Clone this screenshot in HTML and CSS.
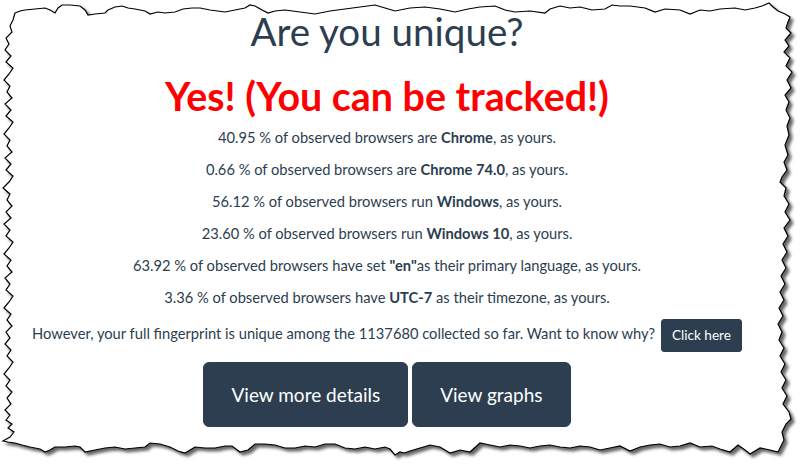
FILE: index.html
```html
<!DOCTYPE html>
<html lang="en">
<head>
<meta charset="utf-8">
<title>Are you unique?</title>
<link rel="stylesheet" href="styles.css">
</head>
<body>
<svg class="paper" width="809" height="471" viewBox="0 0 809 471" aria-hidden="true">
  <defs>
    <filter id="shadow" x="-5%" y="-5%" width="115%" height="115%">
      <feDropShadow dx="3" dy="3" stdDeviation="1.8" flood-color="#000" flood-opacity="0.6"/>
    </filter>
  </defs>
  <path filter="url(#shadow)" fill="#fff" stroke="#000" stroke-width="1.2" stroke-linejoin="miter" d="M15,13 L20,11 25,10 35,9 45,8 50,10 55,13 58,8 62,5 70,5 80,6 85,10 88,15 95,14 105,13 108,10 115,7 122,6 128,8 135,9 145,11 150,14 158,12 165,13 175,12 183,9 192,8 200,8 210,10 225,12 235,10 245,8 250,5 255,6 262,10 268,13 275,11 285,10 300,12 315,14 330,11 345,9 360,7 375,5 385,8 395,11 410,8 425,7 440,9 455,12 468,9 480,7 495,6 505,10 515,12 530,11 545,13 550,9 560,6 570,8 580,7 592,10 605,9 612,5 620,6 630,6 645,8 655,12 665,9 680,10 690,14 700,10 710,11 720,9 735,8 745,10 755,8 762,6 769,3 773,7 778,11 785,14 790,17 788,22 786,28 791,33 785,40 789,46 784,52 790,58 786,66 792,72 787,80 791,88 785,95 789,102 786,110 790,118 787,126 789,135 785,145 788,155 784,162 787,170 782,177 780,182 786,188 784,196 789,204 785,212 790,220 784,228 788,236 783,244 787,252 782,260 786,268 781,276 785,284 780,292 784,300 779,308 783,316 778,324 782,332 779,340 784,348 780,356 785,364 781,372 786,380 782,388 787,396 783,404 789,412 791,419 786,424 782,432 784,440 780,448 778,452 770,450 760,448 750,454 745,450 738,445 730,452 720,449 712,446 700,447 690,443 680,446 670,447 660,444 650,445 640,447 630,451 620,446 610,448 600,450 590,447 580,446 570,448 560,447 550,445 540,446 530,448 520,446 510,445 500,447 490,445 480,443 470,452 460,450 450,453 440,447 430,445 420,448 410,451 404,453 400,452 395,455 390,449 385,447 375,449 365,447 355,449 345,448 335,444 325,444 315,447 305,446 295,448 285,448 275,445 265,444 255,444 248,450 240,452 232,446 225,446 215,448 205,448 195,447 185,453 178,451 170,447 160,444 150,443 145,447 135,448 125,449 115,447 105,448 95,450 85,452 80,447 75,446 65,447 55,447 50,450 45,452 40,449 30,447 22,445 15,443 8,442 3,441 10,437 14,432 8,428 12,424 6,420 10,415 5,410 11,404 7,398 12,392 6,386 10,380 4,374 9,368 13,362 7,356 11,350 5,344 10,338 6,332 12,326 7,320 11,314 4,308 9,302 13,296 6,290 10,284 5,278 12,272 7,266 11,260 4,254 9,248 13,242 6,236 10,230 4,224 11,218 6,212 12,206 7,200 10,194 3,188 9,182 13,176 6,170 11,164 5,158 12,152 7,146 10,140 4,134 9,128 13,122 6,116 11,110 5,104 12,98 7,92 10,86 4,80 9,74 13,68 6,62 11,56 5,50 9,44 6,38 12,32 10,26 13,20 Z"/>
</svg>

<main class="page">
  <h1 class="title">Are you unique?</h1>
  <h2 class="verdict">Yes! (You can be tracked!)</h2>
  <p class="stat">40.95 % of observed browsers are <strong>Chrome</strong>, as yours.</p>
  <p class="stat">0.66 % of observed browsers are <strong>Chrome 74.0</strong>, as yours.</p>
  <p class="stat">56.12 % of observed browsers run <strong>Windows</strong>, as yours.</p>
  <p class="stat">23.60 % of observed browsers run <strong>Windows 10</strong>, as yours.</p>
  <p class="stat">63.92 % of observed browsers have set <strong>"en"</strong>as their primary language, as yours.</p>
  <p class="stat">3.36 % of observed browsers have <strong>UTC-7</strong> as their timezone, as yours.</p>
  <p class="summary">However, your full fingerprint is unique among the 1137680 collected so far. Want to know why? <a class="btn btn-sm" href="#">Click here</a></p>
  <div class="actions">
    <a class="btn btn-lg" href="#">View more details</a>
    <a class="btn btn-lg" href="#">View graphs</a>
  </div>
</main>
</body>
</html>
```

FILE: styles.css
```css
* { box-sizing: border-box; }

html, body {
  margin: 0;
  padding: 0;
  background: #ffffff;
}

body {
  width: 809px;
  height: 471px;
  overflow: hidden;
  position: relative;
  font-family: Lato, "Open Sans", "Liberation Sans", sans-serif;
  font-size: 14.7px;
  line-height: 21.43px;
  color: #2c3e50;
}

.paper {
  position: absolute;
  top: 0;
  left: 0;
  z-index: 0;
}

.page {
  position: relative;
  z-index: 1;
  width: 774px;
  text-align: center;
  padding-top: 10px;
}

.title {
  margin: 0;
  font-size: 38.6px;
  font-weight: 400;
  line-height: 43px;
  color: #2c3e50;
}

.verdict {
  margin: 21px 0 10px;
  font-size: 39.4px;
  font-weight: 700;
  line-height: 43px;
  color: #ff0000;
}

.stat {
  margin: 0 0 10.5px;
}

strong { font-weight: 700; }

.summary {
  margin: 0 0 10px;
}

.btn {
  display: inline-block;
  background: #2c3e50;
  color: #ffffff;
  text-decoration: none;
  border: 1px solid #2c3e50;
  vertical-align: middle;
}

.btn-sm {
  font-size: 13.6px;
  line-height: 19.5px;
  padding: 6px 10px;
  border-radius: 3px;
  margin-left: 2px;
}

.btn-lg {
  font-size: 19px;
  line-height: 25.3px;
  padding: 19px 27px;
  border-radius: 6px;
}

.actions {
  display: flex;
  justify-content: center;
  gap: 4px;
}
```
